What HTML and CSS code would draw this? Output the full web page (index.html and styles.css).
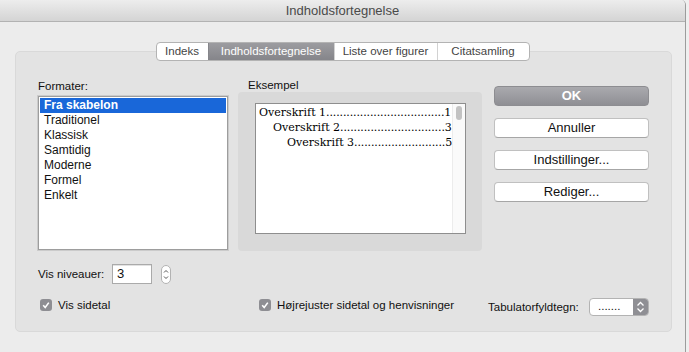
FILE: index.html
```html
<!DOCTYPE html>
<html lang="da">
<head>
    <meta charset="UTF-8">
    <meta name="viewport" content="width=device-width, initial-scale=1.0">
    <title>Indholdsfortegnelse</title>
    <link rel="stylesheet" href="styles.css">
</head>
<body>
    <div class="window">
        <div class="titlebar">Indholdsfortegnelse</div>

        <div class="tabs">
            <div class="tab tab-index">Indeks</div>
            <div class="tab tab-toc active">Indholdsfortegnelse</div>
            <div class="tab tab-figures">Liste over figurer</div>
            <div class="tab tab-citations">Citatsamling</div>
        </div>

        <div class="group">
            <div class="main">
                <div class="col-formats">
                    <div class="field-label">Formater:</div>
                    <ul class="listbox">
                        <li class="selected">Fra skabelon</li>
                        <li>Traditionel</li>
                        <li>Klassisk</li>
                        <li>Samtidig</li>
                        <li>Moderne</li>
                        <li>Formel</li>
                        <li>Enkelt</li>
                    </ul>
                </div>

                <div class="col-preview">
                    <div class="preview-label">Eksempel</div>
                    <div class="preview-box">
                        <div class="sample">
                            <div class="toc">
                                <div class="toc-row"><span class="toc-title">Overskrift 1</span><span class="leader">...................................</span><span class="toc-page">1</span></div>
                                <div class="toc-row l2"><span class="toc-title">Overskrift 2</span><span class="leader">...............................</span><span class="toc-page">3</span></div>
                                <div class="toc-row l3"><span class="toc-title">Overskrift 3</span><span class="leader">...........................</span><span class="toc-page">5</span></div>
                            </div>
                            <div class="scroll-lane"><div class="thumb"></div></div>
                        </div>
                    </div>
                </div>

                <div class="col-buttons">
                    <div class="btn primary">OK</div>
                    <div class="btn">Annuller</div>
                    <div class="btn">Indstillinger...</div>
                    <div class="btn">Rediger...</div>
                </div>
            </div>

            <div class="level-row">
                <span class="level-label">Vis niveauer:</span>
                <div class="number-input">3</div>
                <div class="stepper">
                    <svg width="8" height="17" viewBox="0 0 8 17">
                        <path d="M2 6.5 L4 4.5 L6 6.5 M2 10.5 L4 12.5 L6 10.5" fill="none" stroke="#555" stroke-width="1"/>
                    </svg>
                </div>
            </div>

            <div class="options-row">
                <div class="check-item first">
                    <span class="checkbox">
                        <svg width="12" height="12" viewBox="0 0 12 12"><path d="M3.2 6.3 L5.2 8.5 L8.8 3.6" fill="none" stroke="#fff" stroke-width="1.6"/></svg>
                    </span>
                    Vis sidetal
                </div>
                <div class="check-item">
                    <span class="checkbox">
                        <svg width="12" height="12" viewBox="0 0 12 12"><path d="M3.2 6.3 L5.2 8.5 L8.8 3.6" fill="none" stroke="#fff" stroke-width="1.6"/></svg>
                    </span>
                    Højrejuster sidetal og henvisninger
                </div>
                <div class="leader-setting">
                    <span class="leader-label">Tabulatorfyldtegn:</span>
                    <div class="popup">
                        <span class="popup-value">.......</span>
                        <span class="popup-arrows">
                            <svg width="15" height="16" viewBox="0 0 15 16">
                                <path d="M4.5 6.5 L7.5 3.5 L10.5 6.5 M4.5 9.5 L7.5 12.5 L10.5 9.5" fill="none" stroke="#fff" stroke-width="1.3"/>
                            </svg>
                        </span>
                    </div>
                </div>
            </div>
        </div>
    </div>
</body>
</html>
```

FILE: styles.css
```css
* {
    box-sizing: border-box;
}

body {
    margin: 0;
    background: #efefef;
    font-family: "Liberation Sans", Arial, sans-serif;
    font-size: 11.5px;
    color: #111;
}

.window {
    width: 686px;
    height: 352px;
    background: #ececec;
    border-right: 1px solid #9c9c9c;
    border-top-right-radius: 5px;
    overflow: hidden;
}

.titlebar {
    height: 22px;
    line-height: 21px;
    text-align: center;
    font-size: 13px;
    color: #4a4a4a;
    background: linear-gradient(#ededed, #d4d4d4);
    border-bottom: 1px solid #b2b2b2;
}

/* segmented tab control */
.tabs {
    position: relative;
    z-index: 1;
    display: flex;
    width: max-content;
    height: 19px;
    margin: 20px auto 0;
    background: #fff;
    border: 1px solid #b3b3b3;
    border-radius: 4px;
    overflow: hidden;
}

.tab {
    line-height: 17px;
    text-align: center;
    color: #444;
    border-left: 1px solid #d2d2d2;
}

.tab:first-child {
    border-left: none;
}

.tab-index { width: 51px; }
.tab-toc { width: 126px; }
.tab-figures { width: 103px; }
.tab-citations { width: 92px; }

.tab.active {
    color: #fff;
    background: linear-gradient(#9c9ca0, #85858a);
    border-left-color: #85858a;
}

.group {
    margin: -10px 13px 0 15px;
    padding: 27px 0 15px 21px;
    background: #e3e3e3;
    border: 1px solid #d9d9d9;
    border-radius: 5px;
}

.main {
    display: flex;
    align-items: flex-start;
}

.col-formats {
    width: 191px;
    margin-right: 10px;
}

.field-label {
    line-height: 14px;
    padding-left: 1px;
}

.listbox {
    list-style: none;
    margin: 3px 0 0 1px;
    padding: 1px;
    width: 190px;
    height: 154px;
    background: #fff;
    border: 1px solid #9d9d9d;
    box-shadow: 0 0 0 1px #cbcbcb;
    font-size: 12px;
}

.listbox li {
    height: 15px;
    line-height: 15px;
    padding-left: 4px;
}

.listbox li.selected {
    background: #1967d9;
    color: #fff;
    font-weight: bold;
}

.col-preview {
    width: 244px;
    margin-right: 12px;
}

.preview-label {
    line-height: 13px;
    padding-left: 10px;
}

.preview-box {
    height: 159px;
    padding: 11px 0 0 17px;
    background: #d9d9d9;
    border-radius: 4px;
}

.sample {
    display: flex;
    width: 211px;
    height: 131px;
    background: #fff;
    border: 1px solid #8e8e8e;
}

.toc {
    flex: 1;
    min-width: 0;
    padding: 1px 1px 0 3px;
    font-family: "DejaVu Serif", "Liberation Serif", serif;
    font-size: 11px;
    line-height: 15px;
    color: #000;
}

.toc-row {
    display: flex;
    white-space: nowrap;
}

.toc-row.l2 { padding-left: 14px; }
.toc-row.l3 { padding-left: 28px; }

.toc-title,
.toc-page {
    flex-shrink: 0;
}

.leader {
    flex: 1;
    text-align: right;
    letter-spacing: -0.12px;
}

.scroll-lane {
    width: 13px;
    flex-shrink: 0;
    padding: 2px 0 0 3px;
    background: #fafafa;
    border-left: 1px solid #ececec;
}

.thumb {
    width: 6px;
    height: 14px;
    background: #c2c2c2;
    border-radius: 3px;
}

.col-buttons {
    display: flex;
    flex-direction: column;
    gap: 12px;
    width: 155px;
    padding-top: 7px;
}

.btn {
    height: 20px;
    line-height: 18px;
    text-align: center;
    font-size: 13px;
    color: #111;
    background: #fff;
    border: 1px solid #c0c0c0;
    border-bottom-color: #a6a6a6;
    border-radius: 4px;
}

.btn.primary {
    color: #fff;
    font-weight: bold;
    background: linear-gradient(#aaaaae, #8f8f94);
    border-color: #8d8d91;
}

.level-row {
    display: flex;
    align-items: center;
    height: 20px;
    margin-top: 13px;
}

.level-label {
    width: 75px;
    padding-left: 1px;
}

.number-input {
    width: 40px;
    height: 20px;
    line-height: 18px;
    padding-left: 4px;
    font-size: 13px;
    background: #fff;
    border: 1px solid #aaaaaa;
    box-shadow: inset 0 1px 0 #e2e2e2;
}

.stepper {
    display: flex;
    align-items: center;
    justify-content: center;
    width: 10px;
    height: 19px;
    margin-left: 9px;
    background: #fff;
    border: 1px solid #b3b3b3;
    border-radius: 5px;
}

.options-row {
    display: grid;
    grid-template-columns: 222px 229px auto;
    align-items: center;
    height: 18px;
    margin-top: 14px;
}

.check-item {
    display: flex;
    align-items: center;
    gap: 6px;
    align-self: start;
    height: 14px;
}

.check-item.first {
    padding-left: 3px;
}

.checkbox {
    display: flex;
    width: 12px;
    height: 12px;
    background: #8e8e93;
    border-radius: 3px;
}

.leader-setting {
    display: flex;
    align-items: center;
}

.leader-label {
    width: 101px;
}

.popup {
    display: flex;
    width: 60px;
    height: 18px;
    background: #fff;
    border: 1px solid #b3b3b3;
    border-radius: 4px;
    overflow: hidden;
}

.popup-value {
    flex: 1;
    padding-left: 8px;
    line-height: 15px;
}

.popup-arrows {
    display: flex;
    align-items: center;
    width: 15px;
    background: #8f8f94;
}
```
